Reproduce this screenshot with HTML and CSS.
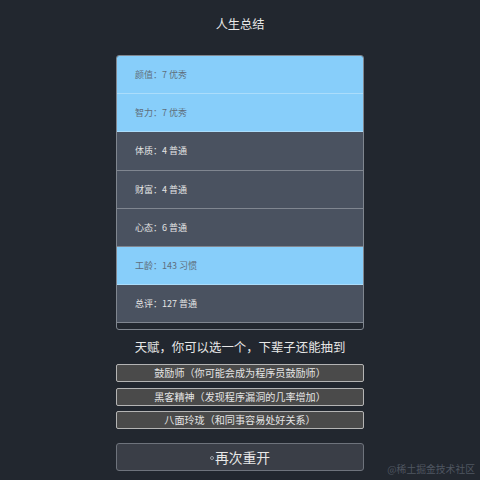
FILE: index.html
```html
<!DOCTYPE html>
<html lang="zh">
<head>
<meta charset="utf-8">
<link rel="stylesheet" href="styles.css">
</head>
<body>
<main class="page">
  <h1 class="title">人生总结</h1>
  <section class="panel">
    <div class="row good">颜值：7 优秀</div>
    <div class="row good">智力：7 优秀</div>
    <div class="row">体质：4 普通</div>
    <div class="row">财富：4 普通</div>
    <div class="row">心态：6 普通</div>
    <div class="row good">工龄：143 习惯</div>
    <div class="row">总评：127 普通</div>
  </section>
  <p class="hint">天赋，你可以选一个，下辈子还能抽到</p>
  <div class="talents">
    <button class="talent">鼓励师（你可能会成为程序员鼓励师）</button>
    <button class="talent">黑客精神（发现程序漏洞的几率增加）</button>
    <button class="talent">八面玲珑（和同事容易处好关系）</button>
  </div>
  <button class="restart"><span class="dot"></span>再次重开</button>
</main>
<div class="watermark">@稀土掘金技术社区</div>
</body>
</html>
```
FILE: styles.css
```css
* { box-sizing: border-box; }
html, body { margin: 0; padding: 0; }
body {
  width: 480px;
  height: 480px;
  background: #22272f;
  font-family: "Noto Sans CJK SC", "Noto Sans", sans-serif;
  color: #e2e2e2;
  position: relative;
  overflow: hidden;
}
.page {
  width: 248px;
  margin: 0 auto;
  display: flex;
  flex-direction: column;
  align-items: stretch;
}
.title {
  margin: 0;
  height: 55px;
  padding-top: 14px;
  font-size: 12.2px;
  line-height: 20px;
  font-weight: normal;
  text-align: center;
  color: #e8e8e8;
}
.panel {
  height: 275px;
  border: 1px solid #80868f;
  border-radius: 3px;
  background: #22272f;
  padding-bottom: 7px;
  overflow: hidden;
  display: flex;
  flex-direction: column;
}
.row {
  flex: 0 0 38.2px;
  display: flex;
  align-items: center;
  padding-left: 18px;
  font-size: 9px;
  background: #4a5260;
  color: #e4e4e4;
  border-bottom: 1px solid rgba(255, 255, 255, 0.3);
}
.row.good {
  background: #87cefa;
  color: #5f6f7c;
}
.hint {
  margin: 0;
  height: 34px;
  font-size: 12.4px;
  line-height: 34px;
  text-align: center;
  color: #e8e8e8;
}
.talents {
  display: flex;
  flex-direction: column;
  gap: 5.5px;
}
.talent {
  height: 18px;
  padding: 0;
  border: 1px solid #b4b4b4;
  border-radius: 2px;
  background: #4a4a4a;
  color: #e4e4e4;
  font-family: inherit;
  font-size: 10.1px;
  line-height: 16px;
}
.restart {
  margin-top: 14px;
  height: 28px;
  padding: 0;
  border: 1px solid #6e737c;
  border-radius: 3px;
  background: #3a3e47;
  color: #e8e8e8;
  font-family: inherit;
  font-size: 13.8px;
  line-height: 26px;
  display: flex;
  align-items: center;
  justify-content: center;
}
.dot {
  width: 4px;
  height: 4px;
  border: 1px solid #9aa0a8;
  border-radius: 50%;
  margin-right: 1px;
  margin-top: 2px;
}
.watermark {
  position: absolute;
  right: 5px;
  bottom: 4px;
  font-size: 9.8px;
  line-height: 14px;
  color: #4f5661;
}
```
